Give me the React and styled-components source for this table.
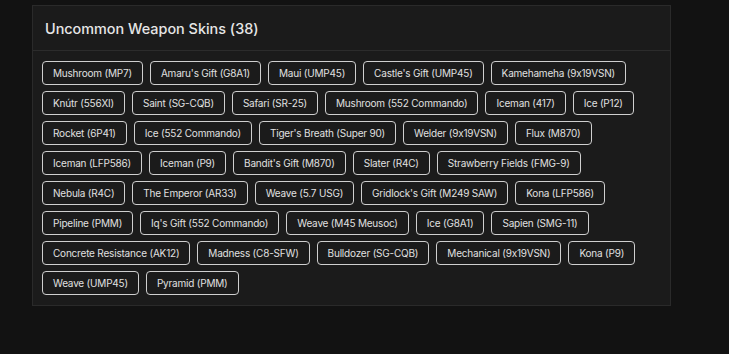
import React from 'react';
import styled, { createGlobalStyle } from 'styled-components';

const skins = [
    'Mushroom (MP7)', "Amaru's Gift (G8A1)", 'Maui (UMP45)', "Castle's Gift (UMP45)", 'Kamehameha (9x19VSN)',
    'Knútr (556XI)', 'Saint (SG-CQB)', 'Safari (SR-25)', 'Mushroom (552 Commando)', 'Iceman (417)', 'Ice (P12)',
    'Rocket (6P41)', 'Ice (552 Commando)', "Tiger's Breath (Super 90)", 'Welder (9x19VSN)', 'Flux (M870)',
    'Iceman (LFP586)', 'Iceman (P9)', "Bandit's Gift (M870)", 'Slater (R4C)', 'Strawberry Fields (FMG-9)',
    'Nebula (R4C)', 'The Emperor (AR33)', 'Weave (5.7 USG)', "Gridlock's Gift (M249 SAW)", 'Kona (LFP586)',
    'Pipeline (PMM)', "Iq's Gift (552 Commando)", 'Weave (M45 Meusoc)', 'Ice (G8A1)', 'Sapien (SMG-11)',
    'Concrete Resistance (AK12)', 'Madness (C8-SFW)', 'Bulldozer (SG-CQB)', 'Mechanical (9x19VSN)', 'Kona (P9)',
    'Weave (UMP45)', 'Pyramid (PMM)',
];

const App = () => {
    return (
        <Page>
            <GlobalStyle />
            <Card>
                <Header>
                    <Title>Uncommon Weapon Skins ({skins.length})</Title>
                </Header>
                <SkinList>
                    {skins.map((skin) => (
                        <SkinTag key={skin}>{skin}</SkinTag>
                    ))}
                </SkinList>
            </Card>
        </Page>
    );
}

const GlobalStyle = createGlobalStyle`
    html, body {
        margin: 0;
        background: #121212;
    }
    body {
        font-family: Inter, "Liberation Sans", sans-serif;
        font-feature-settings: "calt" 0;
        color: #e2e2e2;
    }
`;

const Page = styled.div`
    min-height: 354px;
    padding: 5px 0 0 32px;
    box-sizing: border-box;
`;

const Card = styled.div`
    width: 639px;
    box-sizing: border-box;
    background: #1b1b1b;
    border: 1px solid #2a2a2a;
`;

const Header = styled.div`
    height: 44px;
    display: flex;
    align-items: center;
    padding: 0 12px;
    border-bottom: 1px solid #2c2c2c;
`;

const Title = styled.h2`
    margin: 0;
    font-size: 14.4px;
    font-weight: 500;
    color: #e6e6e6;
`;

// tags wrap freely, rows sit 30px apart
const SkinList = styled.div`
    display: flex;
    flex-wrap: wrap;
    gap: 6px 7px;
    padding: 10px 9px 10px;
`;

const SkinTag = styled.button`
    height: 24px;
    padding: 0 10px;
    background: #1b1b1b;
    border: 1px solid #cfcfcf;
    border-radius: 4px;
    color: #e0e0e0;
    font-family: Inter, "Liberation Sans", sans-serif;
    font-feature-settings: "calt" 0;
    font-size: 10px;
    letter-spacing: -0.2px;
    white-space: nowrap;
    cursor: pointer;
`;

export default App;
